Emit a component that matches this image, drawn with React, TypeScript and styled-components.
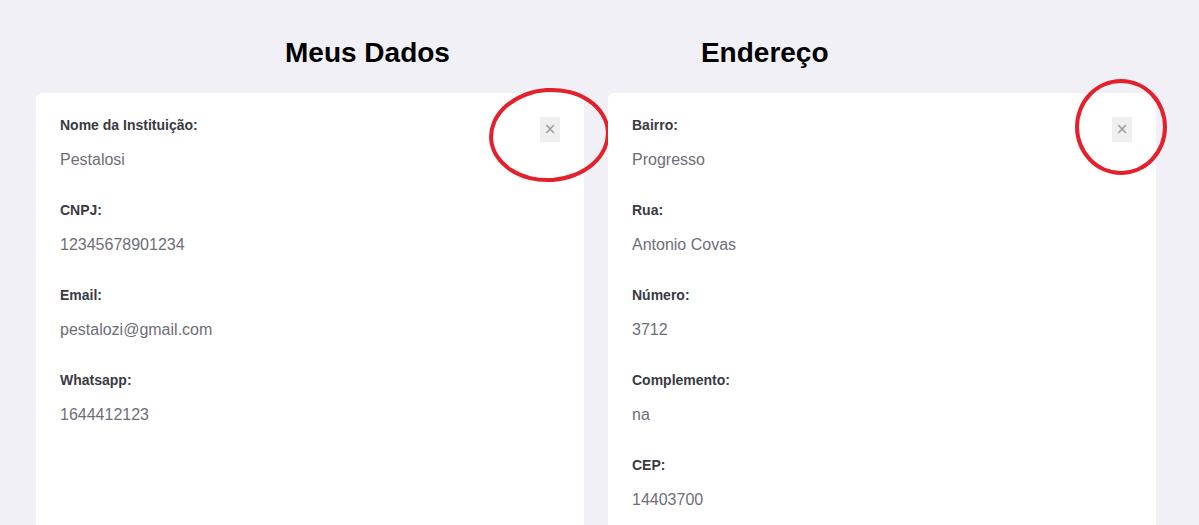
import React from "react";
import styled, { createGlobalStyle } from "styled-components";

const GlobalStyle = createGlobalStyle`
    html, body {
        margin: 0;
        padding: 0;
        background: #f0f0f6;
        font-family: "Liberation Sans", Arial, sans-serif;
        overflow: hidden;
    }
`;

type Field = { label: string; value: string };

const dados: Field[] = [
    { label: "Nome da Instituição:", value: "Pestalosi" },
    { label: "CNPJ:", value: "12345678901234" },
    { label: "Email:", value: "pestalozi@gmail.com" },
    { label: "Whatsapp:", value: "1644412123" },
];

const endereco: Field[] = [
    { label: "Bairro:", value: "Progresso" },
    { label: "Rua:", value: "Antonio Covas" },
    { label: "Número:", value: "3712" },
    { label: "Complemento:", value: "na" },
    { label: "CEP:", value: "14403700" },
];

const Card = ({ fields, mark }: { fields: Field[]; mark: "wide" | "round" }) => (
    <_Card>
        <ul>
            {fields.map((f) => (
                <li key={f.label}>
                    <Label>{f.label}</Label>
                    <Value>{f.value}</Value>
                </li>
            ))}
        </ul>
        <CloseButton aria-label="fechar">×</CloseButton>
        <Circle $mark={mark} />
    </_Card>
);

const App = () => (
    <>
        <GlobalStyle />
        <Page>
            <Titles>
                <h2>Meus Dados</h2>
                <h2>Endereço</h2>
            </Titles>
            <Cards>
                <Card fields={dados} mark="wide" />
                <Card fields={endereco} mark="round" />
            </Cards>
        </Page>
    </>
);

export default App;

const Page = styled.div`
    width: 1199px;
    height: 525px;
    overflow: hidden;
    box-sizing: border-box;
    padding: 0 43px 0 36px;
    display: grid;
    grid-template-rows: 93px 1fr;
`;

const Titles = styled.div`
    display: flex;
    gap: 251px;
    padding: 37px 0 0 249px;
    h2 {
        margin: 0;
        font-size: 28px;
        line-height: 32px;
        font-weight: 700;
        color: #000;
    }
`;

const Cards = styled.div`
    display: grid;
    grid-template-columns: 548px 548px;
    column-gap: 24px;
`;

const _Card = styled.div`
    position: relative;
    background: #fff;
    border-radius: 6px 6px 0 0;
    padding: 25px 24px 0;
    box-sizing: border-box;
    ul {
        list-style: none;
        margin: 0;
        padding: 0;
        display: flex;
        flex-direction: column;
        gap: 34px;
    }
    li {
        display: flex;
        flex-direction: column;
        gap: 19px;
    }
`;

const Label = styled.span`
    font-size: 14px;
    line-height: 14px;
    font-weight: 700;
    color: #3a3a44;
`;

const Value = styled.span`
    font-size: 16px;
    line-height: 18px;
    color: #6e6e78;
`;

const CloseButton = styled.button`
    position: absolute;
    top: 24px;
    right: 24px;
    width: 20px;
    height: 25px;
    padding: 0;
    border: none;
    background: #efefef;
    color: #9a9a9a;
    font-family: "DejaVu Sans", sans-serif;
    font-size: 15px;
    line-height: 25px;
    text-align: center;
    cursor: pointer;
`;

const Circle = styled.div<{ $mark: "wide" | "round" }>`
    position: absolute;
    pointer-events: none;
    border: 4px solid #e3202c;
    border-radius: 50%;
    box-sizing: border-box;
    ${(p) =>
        p.$mark === "wide"
            ? `left: 453px; top: -5px; width: 121px; height: 94px; transform: rotate(-4deg);`
            : `left: 467px; top: -14px; width: 92px; height: 96px;`}
`;
